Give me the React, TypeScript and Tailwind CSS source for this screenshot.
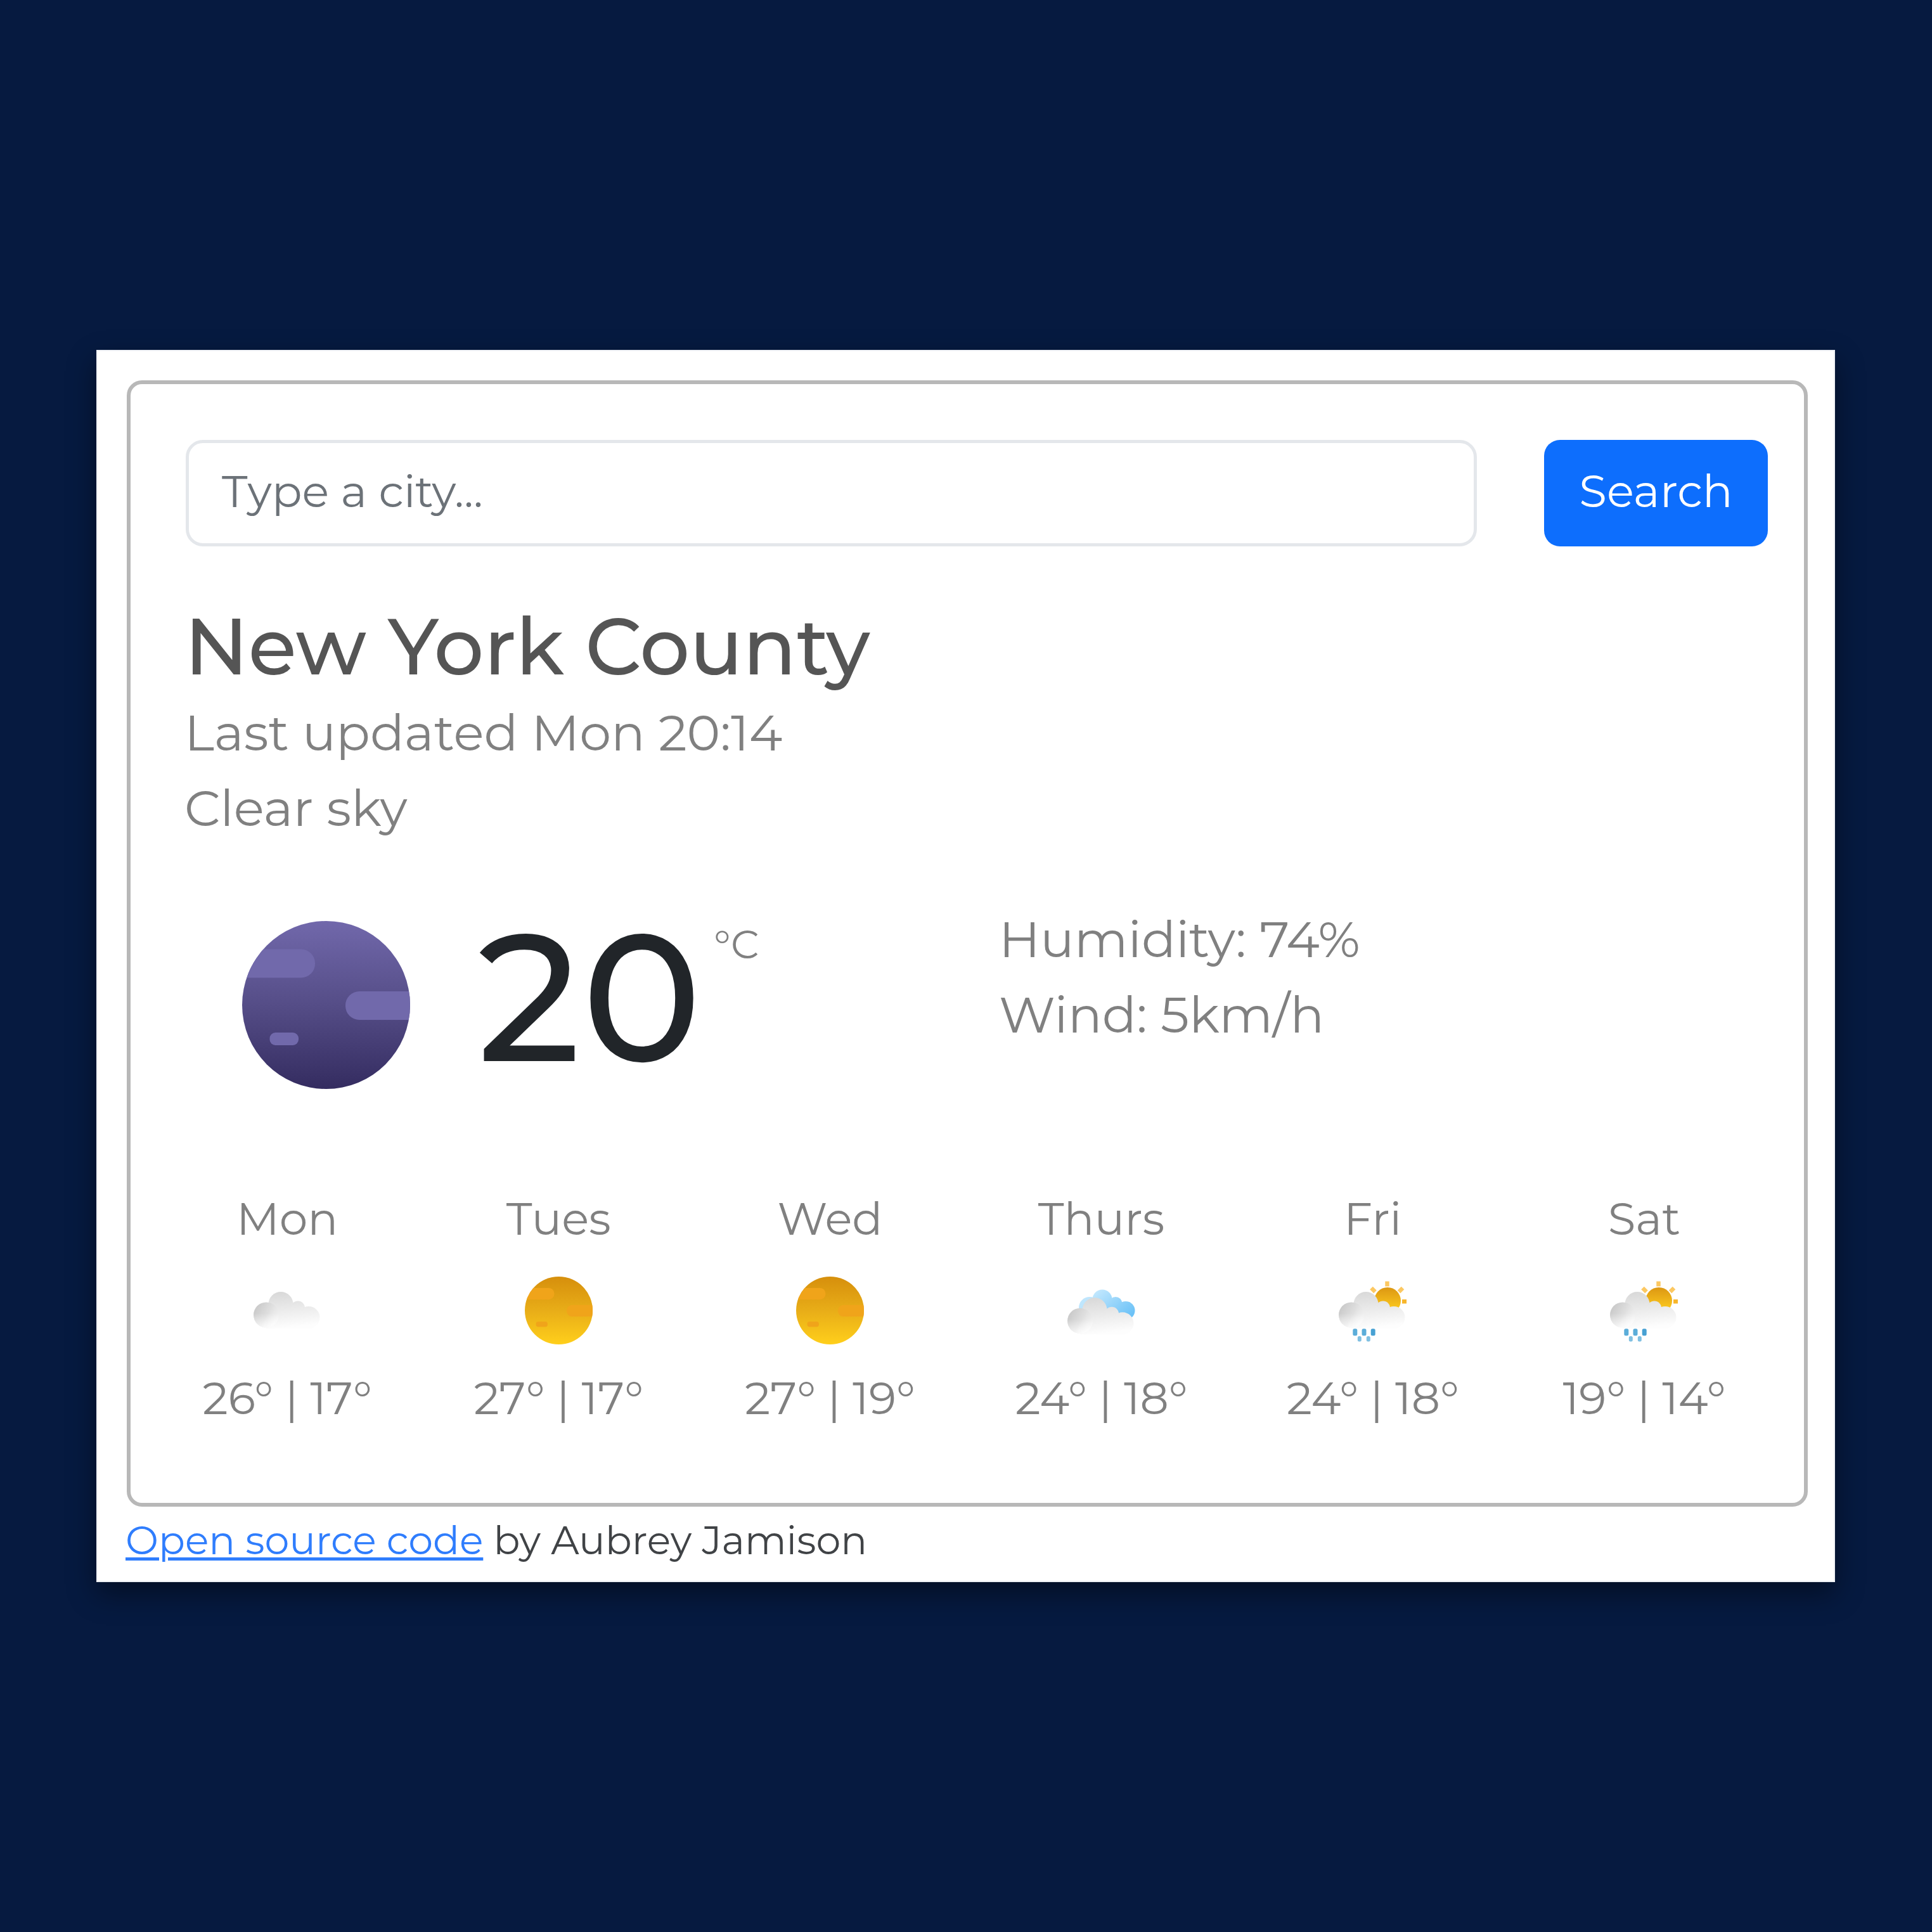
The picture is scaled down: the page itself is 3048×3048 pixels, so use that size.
type IconKind = "cloud" | "sun" | "clouds" | "shower";

type Day = { name: string; icon: IconKind; high: number; low: number };

const days: Day[] = [
  { name: "Mon", icon: "cloud", high: 26, low: 17 },
  { name: "Tues", icon: "sun", high: 27, low: 17 },
  { name: "Wed", icon: "sun", high: 27, low: 19 },
  { name: "Thurs", icon: "clouds", high: 24, low: 18 },
  { name: "Fri", icon: "shower", high: 24, low: 18 },
  { name: "Sat", icon: "shower", high: 19, low: 14 },
];

type OrbProps = { id: string; stops: [string, string][]; band: string; className: string };

function Orb({ id, stops, band, className }: OrbProps) {
  return (
    <svg viewBox="0 0 265 265" className={className}>
      <defs>
        <linearGradient id={`${id}-fill`} x1="0" y1="0" x2="0" y2="1">
          {stops.map(([offset, color]) => (
            <stop key={offset} offset={offset} stopColor={color} />
          ))}
        </linearGradient>
        <clipPath id={`${id}-clip`}>
          <circle cx="132.5" cy="132.5" r="132.5" />
        </clipPath>
      </defs>
      <circle cx="132.5" cy="132.5" r="132.5" fill={`url(#${id}-fill)`} />
      <g clipPath={`url(#${id}-clip)`} fill={band}>
        <rect x="-30" y="44.5" width="145" height="45" rx="22" />
        <rect x="163" y="111" width="140" height="45" rx="22" />
        <rect x="43.5" y="176" width="45.5" height="20" rx="9" />
      </g>
    </svg>
  );
}

function Moon() {
  return (
    <Orb
      id="moon"
      stops={[["0", "#7168ab"], ["0.5", "#554d87"], ["1", "#342c60"]]}
      band="#7169ab"
      className="size-[265px]"
    />
  );
}

function Cloud({ id, dy = 0 }: { id: string; dy?: number }) {
  return (
    <g transform={`translate(0 ${dy})`}>
      <defs>
        <linearGradient id={`${id}-body`} gradientUnits="userSpaceOnUse" x1="50" y1="24" x2="56" y2="80">
          <stop offset="0" stopColor="#d9d9d9" />
          <stop offset="1" stopColor="#fdfdfd" />
        </linearGradient>
        <linearGradient id={`${id}-puff`} gradientUnits="userSpaceOnUse" x1="3" y1="48" x2="38" y2="68">
          <stop offset="0" stopColor="#c9c9c9" />
          <stop offset="0.55" stopColor="#dfdfdf" />
          <stop offset="1" stopColor="#efefef" stopOpacity="0" />
        </linearGradient>
        <linearGradient id={`${id}-fade`} gradientUnits="userSpaceOnUse" x1="0" y1="58" x2="0" y2="81">
          <stop offset="0" stopColor="#fff" stopOpacity="0" />
          <stop offset="1" stopColor="#fff" stopOpacity="0.7" />
        </linearGradient>
      </defs>
      <g fill={`url(#${id}-body)`}>
        <circle cx="43" cy="43.5" r="19.5" />
        <circle cx="70" cy="49.5" r="11" />
        <circle cx="87" cy="64.5" r="17.5" />
        <path d="M20 55 L43 40 L70 42 L86 57 L88 82 H20 Z" />
      </g>
      <circle cx="20" cy="60.5" r="20" fill={`url(#${id}-puff)`} />
      <circle cx="20" cy="60.5" r="20" fill={`url(#${id}-fade)`} />
    </g>
  );
}

function WeatherIcon({ kind, id }: { kind: IconKind; id: string }) {
  if (kind === "sun") {
    return (
      <Orb
        id={id}
        stops={[["0", "#d68f0c"], ["0.5", "#e8ad18"], ["1", "#ffcf1b"]]}
        band="#f0a41a"
        className="size-[107px]"
      />
    );
  }

  return (
    <svg viewBox="0 0 107 107" className="size-[107px]">
      {kind === "cloud" && <Cloud id={id} />}

      {kind === "clouds" && (
        <>
          <defs>
            <linearGradient id={`${id}-sky`} gradientUnits="userSpaceOnUse" x1="52" y1="20" x2="92" y2="68">
              <stop offset="0" stopColor="#bfe6fd" />
              <stop offset="1" stopColor="#6cc2f7" />
            </linearGradient>
          </defs>
          <g fill={`url(#${id}-sky)`}>
            <circle cx="35" cy="49" r="17" />
            <circle cx="55" cy="36" r="15.5" />
            <circle cx="76" cy="42.5" r="10.5" />
            <circle cx="92" cy="53.5" r="14.5" />
            <path d="M35 45 L60 36 L92 50 L92 66 L35 66 Z" />
          </g>
          <Cloud id={id} dy={9.3} />
        </>
      )}

      {kind === "shower" && (
        <>
          <defs>
            <linearGradient id={`${id}-sun`} x1="0" y1="0" x2="0" y2="1">
              <stop offset="0" stopColor="#dc9713" />
              <stop offset="0.8" stopColor="#fbc81e" />
            </linearGradient>
          </defs>
          <g stroke="#fcc862" strokeWidth="6.5">
            <path d="M76.5 7.5 V15.5" />
            <path d="M51.5 18 L57.5 24" />
            <path d="M101 18 L95 24" />
            <path d="M100 39.3 H107" stroke="#f7b62c" />
          </g>
          <circle cx="77" cy="38" r="21" fill={`url(#${id}-sun)`} />
          <Cloud id={id} />
          <g fill="#5badd9">
            <rect x="22.3" y="82.2" width="7" height="11" rx="2.5" />
            <rect x="36.5" y="82.2" width="7" height="11" rx="2.5" />
            <rect x="50.7" y="82.2" width="7" height="11" rx="2.5" fill="#47a1d3" />
            <rect x="29.8" y="94" width="6" height="8.5" rx="2.5" fill="#80c0e2" />
            <rect x="43.8" y="94" width="6" height="8.5" rx="2.5" fill="#80c0e2" />
          </g>
        </>
      )}
    </svg>
  );
}

export default function App() {
  return (
    <div className="flex h-[3048px] w-[3048px] flex-col bg-[#061a40] pt-[552px] pl-[152px] font-['Montserrat','Inter',sans-serif]">
      <main className="h-[1944px] w-[2743px] bg-white px-[48px] pt-[48px] shadow-[0_18px_42px_rgba(0,0,0,0.43),inset_0_0_0_2px_#eff1f5]">
        <section className="h-[1777px] w-[2652px] rounded-[24px] border-[6px] border-[#b8b8b8] pt-[88px]">
          <form className="flex pl-[87px]">
            <input
              type="text"
              placeholder="Type a city..."
              className="h-[168px] w-[2037px] rounded-[27px] border-[5px] border-[#e4e7eb] bg-white pb-[6px] pl-[52px] text-[70.5px] text-[#212529] placeholder:text-[#6c7278]"
            />
            <button
              type="button"
              className="ml-[106px] h-[168px] w-[353px] rounded-[25px] bg-[#0d6efd] pb-[5px] text-center text-[71px] text-white"
            >
              Search
            </button>
          </form>

          <header className="pt-[92px] pl-[85px]">
            <h1 className="text-[124.2px] leading-[132px] font-medium text-[#555555]">New York County</h1>
            <p className="mt-[10px] text-[79.5px] leading-[119px] text-[#808080]">Last updated Mon 20:14</p>
            <p className="text-[79.5px] leading-[119px] text-[#808080]">Clear sky</p>
          </header>

          <div className="flex h-[535px] pt-[88px]">
            <div className="mt-[31px] ml-[176px] w-[265px]">
              <Moon />
            </div>
            <div className="mt-[31px] ml-[106px] flex w-[823px] items-start">
              <strong className="text-[284px] leading-[238px] font-medium tracking-[2px] text-[#212529]">20</strong>
              <span className="ml-[17px] text-[62.5px] leading-[73px] text-[#808080]">°C</span>
            </div>
            <ul className="text-[79.9px] leading-[119px] text-[#808080]">
              <li>Humidity: 74%</li>
              <li>Wind: 5km/h</li>
            </ul>
          </div>

          <ol className="grid grid-cols-6 pr-[38px] pl-[33px] text-center text-[71px] leading-[107px] text-[#808080]">
            {days.map((day) => (
              <li key={day.name} className="flex flex-col items-center">
                <span>{day.name}</span>
                <div className="mt-[38px] h-[107px]">
                  <WeatherIcon kind={day.icon} id={`icon-${day.name}`} />
                </div>
                <span className="mt-[31px] whitespace-nowrap">
                  {`${day.high}° | ${day.low}°`}
                </span>
              </li>
            ))}
          </ol>
        </section>

        <footer className="mt-[7px] -ml-[2px] text-[61.9px] leading-[93px] text-[#404346]">
          <a className="text-[#2f7dfd] underline decoration-[5px] underline-offset-[5px]">Open source code</a>
          {" by Aubrey Jamison"}
        </footer>
      </main>
    </div>
  );
}
